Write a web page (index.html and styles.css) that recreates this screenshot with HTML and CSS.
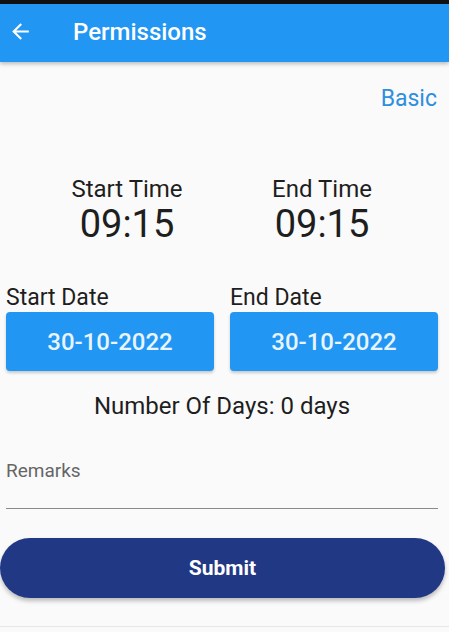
FILE: index.html
```html
<!DOCTYPE html>
<html>
<head>
	<title>Permissions</title>
	<meta charset="UTF-8">
	<meta name="viewport" content="width=device-width, initial-scale=1.0">
	<link rel="stylesheet" href="styles.css">
</head>
<body>
	<div class="screen">
		<div class="status-bar"></div>
		<header class="app-bar">
			<svg class="back-icon" viewBox="0 0 24 24" width="24" height="24">
				<path d="M20 11H7.83l5.59-5.59L12 4l-8 8 8 8 1.41-1.41L7.83 13H20v-2z" fill="#fff"/>
			</svg>
			<h1 class="title">Permissions</h1>
		</header>

		<main class="content">
			<div class="mode-row">
				<a class="mode-link">Basic</a>
			</div>

			<div class="time-row">
				<div class="time-block">
					<div class="time-label">Start Time</div>
					<div class="time-value">09:15</div>
				</div>
				<div class="time-block">
					<div class="time-label">End Time</div>
					<div class="time-value">09:15</div>
				</div>
			</div>

			<div class="date-row">
				<div class="date-block">
					<div class="date-label">Start Date</div>
					<button class="date-btn">30-10-2022</button>
				</div>
				<div class="date-block">
					<div class="date-label">End Date</div>
					<button class="date-btn">30-10-2022</button>
				</div>
			</div>

			<div class="days-count">Number Of Days: 0 days</div>

			<div class="remarks-field">
				<label for="remarks">Remarks</label>
				<input type="text" id="remarks" name="remarks">
			</div>

			<button class="submit-btn">Submit</button>
		</main>
		<div class="bottom-line"></div>
	</div>
</body>
</html>
```

FILE: styles.css
```css
body {
	margin: 0;
	background-color: #ffffff;
	font-family: Roboto, "Noto Sans", sans-serif;
	color: #1e1e1e;
}
.screen {
	width: 449px;
	height: 632px;
	background-color: #fafafa;
	display: flex;
	flex-direction: column;
	overflow: hidden;
}
.status-bar {
	height: 4px;
	background-color: #111111;
}
.app-bar {
	height: 58px;
	background-color: #2196f3;
	display: flex;
	align-items: center;
	padding-left: 8px;
	padding-bottom: 3px;
	box-sizing: border-box;
	box-shadow: 0 2px 4px rgba(0, 0, 0, 0.25);
	position: relative;
	z-index: 1;
}
.back-icon {
	width: 25px;
	height: 25px;
}
.title {
	margin: 0 0 0 40px;
	font-size: 24px;
	font-weight: 500;
	color: #ffffff;
}
.content {
	flex: 1;
	display: flex;
	flex-direction: column;
}
.mode-row {
	display: flex;
	justify-content: flex-end;
	padding: 22px 12px 0 0;
	height: 30px;
}
.mode-link {
	font-size: 23px;
	line-height: 30px;
	color: #2f8fdf;
}
.time-row {
	display: grid;
	grid-template-columns: 195px 195px;
	justify-content: center;
	margin-top: 60px;
}
.time-block {
	text-align: center;
}
.time-label {
	font-size: 24px;
	line-height: 30px;
}
.time-value {
	font-size: 38px;
	line-height: 40px;
}
.date-row {
	display: grid;
	grid-template-columns: 208px 208px;
	gap: 16px;
	padding: 0 6px;
	margin-top: 40px;
}
.date-label {
	font-size: 23px;
	line-height: 28px;
}
.date-btn {
	width: 100%;
	height: 59px;
	border: none;
	border-radius: 4px;
	background-color: #2196f3;
	color: #e8f4ff;
	font-family: Roboto, "Noto Sans", sans-serif;
	font-size: 24px;
	font-weight: 500;
	box-shadow: 0 2px 3px rgba(0, 0, 0, 0.2);
	cursor: pointer;
}
.days-count {
	text-align: center;
	font-size: 24px;
	line-height: 30px;
	margin: 20px 5px 0 0;
}
.remarks-field {
	display: flex;
	flex-direction: column;
	margin: 38px 11px 0 6px;
}
.remarks-field label {
	font-size: 19px;
	line-height: 24px;
	color: #666666;
}
.remarks-field input {
	border: none;
	border-bottom: 1px solid #8a8a8a;
	background: transparent;
	height: 25px;
	padding: 0;
	margin-top: 0;
	outline: none;
}
.submit-btn {
	margin: 29px 4px 0 0;
	height: 60px;
	border: none;
	border-radius: 30px;
	background-color: #213885;
	color: #ffffff;
	font-family: Roboto, "Noto Sans", sans-serif;
	font-size: 21px;
	font-weight: 700;
	box-shadow: 0 3px 4px rgba(0, 0, 0, 0.25);
	cursor: pointer;
}
.bottom-line {
	height: 1px;
	background-color: #e6e6e6;
	margin-bottom: 5px;
}
```
